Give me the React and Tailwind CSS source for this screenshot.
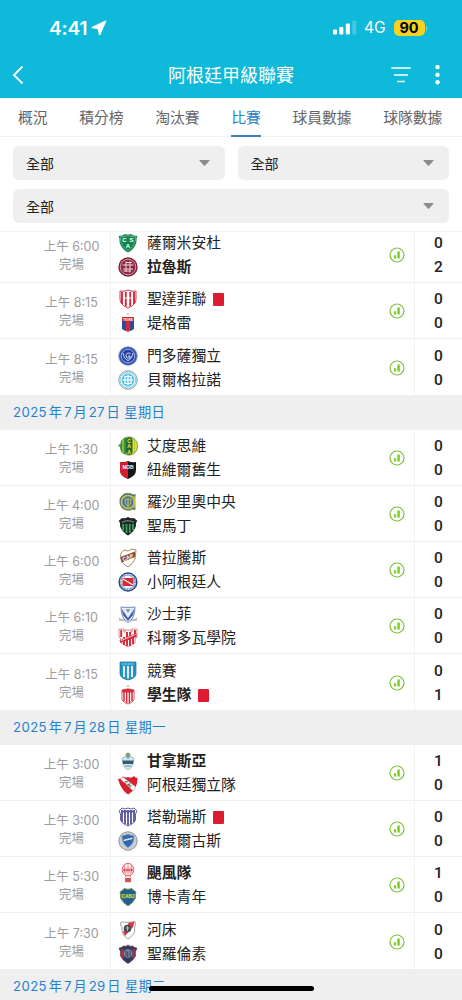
const SHIELD = "M2 2Q6 3 10 1Q14 3 18 2V10Q18 16 10 19Q2 16 2 10Z";

function Letters({ children, x = 10, y = 12, size = 6, fill = "#fff", ...rest }) {
  return (
    <text x={x} y={y} fontSize={size} fill={fill} fontWeight="700" textAnchor="middle" fontFamily="Liberation Sans, sans-serif" {...rest}>
      {children}
    </text>
  );
}

const crests = {
  sarmiento: (
    <>
      <path d="M.5 3Q5 3 7 1Q10 2 13 1Q15 3 19.5 3Q18 6 18.5 9Q17 16 10 19.5Q3 16 1.5 9Q2 6 .5 3Z" fill="#15834c" />
      <path d="M2.2 4Q10 1.5 17.8 4Q17 14 10 18Q3 14 2.2 4Z" fill="none" stroke="#8fcbaa" strokeWidth=".6" />
      <Letters x={6.5} y={9}>C</Letters>
      <Letters x={13.5} y={9}>S</Letters>
      <Letters y={15}>A</Letters>
    </>
  ),
  lanus: (
    <>
      <circle cx="10" cy="10" r="9.7" fill="#7d1f36" />
      <circle cx="10" cy="10" r="7.8" fill="#8d2941" stroke="#e2bdc5" strokeWidth=".8" />
      <path d="M8 4.5V15M12 4.5V15.5M4.5 8H15.5M5 12H15M8 5.5H14M5.5 14H13" stroke="#efd5da" strokeWidth="1" />
    </>
  ),
  union: (
    <>
      <path d={SHIELD} fill="#fff" stroke="#c8253a" strokeWidth=".9" />
      <path d="M4 3V15M7.8 3V17.5M12.2 3V17.5M16 3V15" stroke="#d9243b" strokeWidth="1.9" />
      <path d="M6 6V12M14 6V12M6 9H14" stroke="#fff" strokeWidth="1" />
    </>
  ),
  tigre: (
    <>
      <circle cx="10" cy="1" r=".9" fill="#f0a48c" />
      <path d="M4 4H16V16Q13 18 10 18.5Q7 18 4 16Z" fill="#244d9c" />
      <path d="M4 4H16V8H12.2V18L10 18.5L7.8 18V8H4Z" fill="#d92835" />
      <Letters y={7.5} size={3.2}>TIGRE</Letters>
    </>
  ),
  mendoza: (
    <>
      <circle cx="10" cy="10" r="9.2" fill="#3552ae" stroke="#7288cc" strokeWidth="1" />
      <circle cx="10" cy="10" r="6.8" fill="#2442a2" stroke="#b7c3e9" strokeWidth=".8" />
      <path d="M5 7Q6 13 10 14.5Q14 13 15 7M12.5 7.5Q8 6 8 10Q8.5 13 12 12V10H10" fill="none" stroke="#dde4fa" strokeWidth="1" />
    </>
  ),
  belgrano: (
    <>
      <circle cx="10" cy="10" r="9.3" fill="#e6f7fb" stroke="#729eac" strokeWidth=".9" />
      <circle cx="10" cy="10" r="7.9" fill="none" stroke="#8aaab6" strokeWidth="1.2" strokeDasharray="1 .8" />
      <circle cx="10" cy="10" r="6.4" fill="#55c5e9" />
      <path d="M10 4.5V15.5M4.5 10H15.5M10 6.5H7V13.5H10M10 6.5H13V13.5H10" fill="none" stroke="#fff" strokeWidth="1.2" />
    </>
  ),
  aldosivi: (
    <>
      <ellipse cx="11" cy="10" rx="8.6" ry="9.2" fill="#e9df35" stroke="#4a9346" strokeWidth=".8" />
      <path d="M8 1.5Q2 3 3 8L0 9L2.5 12Q2 17 7 18.5L9 15V4Z" fill="#37913e" />
      <path d="M5 3V17M16.5 4V16" stroke="#b7d238" strokeWidth="1.2" />
      <rect x="8" y="1.5" width="6.5" height="17" rx="2.5" fill="#26672f" />
      <Letters x={11.2} y={7} size={5.2} fill="#f2e952">C</Letters>
      <Letters x={11.2} y={12.4} size={5.2} fill="#f2e952">A</Letters>
      <Letters x={11.2} y={17.6} size={5.2} fill="#f2e952">A</Letters>
    </>
  ),
  newells: (
    <>
      <path d={SHIELD} fill="#171515" />
      <path d="M2 2Q6 3 10 1V19Q2 16 2 10Z" fill="#d71d2c" />
      <Letters y={9.2} size={5}>NOB</Letters>
    </>
  ),
  rosario: (
    <>
      <path d="M16 3Q18 1 17 5V15Q18 19 15 17Q9 20 4 16Q1 12 2 7Q5 0 12 1.5Z" fill="#3f74a3" stroke="#817d43" strokeWidth=".7" />
      <circle cx="10" cy="10" r="6.5" fill="none" stroke="#d6c83d" strokeWidth="1.5" />
      <path d="M7 7H13V9Q13 13 10 15Q7 13 7 9Z" fill="#557fa5" stroke="#d6c83d" strokeWidth=".8" />
      <path d="M10 7V14M16 4V16" stroke="#d6c83d" strokeWidth="1" />
    </>
  ),
  sanmartin: (
    <>
      <path d="M.5 5L4 2Q7 3 10 1Q13 3 16 2L19.5 5Q17.5 6 18 10Q16 16 10 19.5Q4 16 2 10Q2.5 6 .5 5Z" fill="#1d2a23" />
      <path d="M5.2 8V14.5M8.5 8V17M11.8 8V17M15 8V14" stroke="#36a05f" strokeWidth="1.8" />
      <path d="M4 6.5Q10 3 16 6.5" fill="none" stroke="#d8e0da" strokeWidth=".9" strokeDasharray="1.2 .5" />
    </>
  ),
  platense: (
    <>
      <path d="M3 5L6 2L10 3L14 1L18 2L17 11Q15 16 10 19Q3 15 2.5 9Z" fill="#fff" stroke="#a47b5b" strokeWidth=".9" />
      <path d="M2.5 9L17 3.5V9L3.5 14.5Z" fill="#87512d" />
      <Letters y={11.3} size={5.4} transform="rotate(-21 10 10)">CAP</Letters>
    </>
  ),
  argentinos: (
    <>
      <circle cx="10" cy="10" r="8.9" fill="#fff" stroke="#254a90" strokeWidth="1.5" />
      <circle cx="10" cy="10" r="7.1" fill="none" stroke="#50709f" strokeWidth="1.5" strokeDasharray="1 .6" />
      <rect x="4.5" y="6" width="11" height="8" rx="1" fill="#db2733" />
      <path d="M5 7L15 13" stroke="#fff" strokeWidth="1.2" />
    </>
  ),
  velez: (
    <>
      <circle cx="10" cy="1" r=".7" fill="#d9c795" />
      <path d="M1 16H19M1 14L5 17M19 14L15 17" stroke="#a6a28c" strokeWidth="1" />
      <path d="M3 3Q10 4 17 3Q17 15 10 18.5Q3 15 3 3Z" fill="#e9effa" stroke="#526fa9" strokeWidth=".8" />
      <path d="M3.5 4.5L10 14L16.5 4.5L15 11L10 17L5 11Z" fill="#3c61aa" />
      <path d="M7.5 5H12.5L10 9Z" fill="#7c96c7" />
    </>
  ),
  instituto: (
    <>
      <path d="M1 1H6V4H7V2H13V4H14V1H19V9L17 11V15L10 19L3 15V11L1 9Z" fill="#fff" stroke="#d3535f" strokeWidth=".7" />
      <path d="M3.2 2V9M6 9V17M9 4V18M12 4V18M15 9V16M17 2V9" stroke="#d4293b" strokeWidth="1.9" />
      <path d="M1.5 12L18.5 5V9L2.5 15Z" fill="#d4293b" />
      <path d="M3 12.5L17.5 6.5" stroke="#f8d9dc" strokeWidth="1.3" strokeDasharray="1.6 .6" />
    </>
  ),
  racing: (
    <>
      <path d="M2 1H18V13Q18 17 10 19Q2 17 2 13Z" fill="#2394c5" stroke="#246f94" strokeWidth=".7" />
      <path d="M6 5V16M10 5V17.5M14 5V16" stroke="#fff" strokeWidth="1.7" />
      <path d="M4 3H16" stroke="#b9e4f5" strokeWidth="1.1" strokeDasharray="1 .5" />
    </>
  ),
  estudiantes: (
    <>
      <circle cx="10" cy="1.2" r=".9" fill="#e29a72" />
      <path d="M4 5Q10 2.5 16 5V15Q14 18 10 19Q6 18 4 15Z" fill="#fff" stroke="#d23040" strokeWidth=".8" />
      <path d="M4.2 5Q10 2.8 15.8 5V7.5H4.2Z" fill="#d52c3d" />
      <path d="M6 7V16.5M8.7 7V18M11.4 7V18M14 7V16.5" stroke="#d52c3d" strokeWidth="1.5" />
    </>
  ),
  gimnasia: (
    <>
      <path d="M7.5 3Q10 0 12.5 3L12 7H8Z" fill="#8f9b83" />
      <path d="M4 7Q7 5 10 6Q13 5 16 7L15 14Q13 18 10 19Q7 18 5 14Z" fill="#cfe8ee" stroke="#8eafb8" strokeWidth=".7" />
      <path d="M4.3 9.5H15.7L15 13H5Z" fill="#385b75" />
      <path d="M10 4V8M8 5H12M7 15H13" stroke="#6b918f" strokeWidth="1.1" />
    </>
  ),
  independiente: (
    <>
      <path d="M0 4Q3 4 5 1.5Q8 3 10 2Q13 4 16 1Q17 3 19.5 3Q20 14 10 19.5Q3 15 0 4Z" fill="#d8202f" />
      <path d="M2 3.7L5 2L18 12L15 16Z" fill="#fff" stroke="#a64a51" strokeWidth=".3" />
      <Letters y={10.7} size={4.8} fill="#333" transform="rotate(39 10 9)">CAI</Letters>
    </>
  ),
  talleres: (
    <>
      <path d="M1 4L4 1L7 2L10 1L13 2L16 1L19 4L17.5 7V13Q16 17 10 19Q4 17 2.5 13V7Z" fill="#fff" stroke="#57509a" strokeWidth=".9" />
      <path d="M4 3V15M7 3V17M10 3V18M13 3V17M16 3V15" stroke="#413b8b" strokeWidth="1.6" />
      <path d="M3 4.5H17" stroke="#5d579f" strokeWidth="1.8" />
    </>
  ),
  godoy: (
    <>
      <circle cx="10" cy="10" r="9.2" fill="#c9ced4" stroke="#8d9297" strokeWidth="1" />
      <path d="M4 5Q10 2 16 5Q16 13 10 16.5Q4 13 4 5Z" fill="#3567ad" stroke="#6d91c2" strokeWidth=".8" />
      <path d="M5.5 9.5L14.5 7.2" stroke="#d9e8f6" strokeWidth="1.5" />
    </>
  ),
  huracan: (
    <>
      <ellipse cx="10" cy="6.6" rx="5.8" ry="6.2" fill="#fff2f2" stroke="#df4c55" strokeWidth=".9" />
      <path d="M7 1.5Q5 7 8 12.5M10 .5V12.5M13 1.5Q15 7 12 12.5M4.5 5H15.5M5 9H15" fill="none" stroke="#e77a80" strokeWidth=".7" />
      <path d="M5.5 7H14.5" stroke="#d93943" strokeWidth="1.8" strokeDasharray="1.4 .5" />
      <path d="M7.5 12.5L8 15M12.5 12.5L12 15" stroke="#c26767" strokeWidth=".7" />
      <rect x="7" y="15" width="6" height="4.3" rx=".8" fill="#d94d55" />
    </>
  ),
  boca: (
    <>
      <path d="M2 5Q5 3 6 1.5Q10 3 14 1.5Q15 3 18 5Q17 8 17.5 11Q15 16 10 19Q5 16 2.5 11Q3 8 2 5Z" fill="#205f8e" stroke="#789548" strokeWidth=".9" />
      <path d="M3 7H17V11.5H3Z" fill="#317b7d" />
      <Letters y={10.8} size={4.8} fill="#f2dc3e">CABJ</Letters>
    </>
  ),
  river: (
    <>
      <path d="M3 2Q10 3 17 1.5Q18 4 16.5 8Q18 14 10 19Q5 16 4 11Q5 7 2.5 5Z" fill="#fff" stroke="#95989b" strokeWidth=".9" />
      <path d="M11 2.5L16.5 2L15 7L7 16L5 12Z" fill="#d93443" />
      <circle cx="9.5" cy="8.5" r="3.8" fill="#454b50" />
      <path d="M7.5 8H11.5M9.5 6V11" stroke="#bbc0c3" strokeWidth=".9" />
    </>
  ),
  sanlorenzo: (
    <>
      <path d="M1 4Q4 4 5 2Q8 3 10 1Q12 3 15 2Q16 4 19 4Q17 7 17.5 12Q15 17 10 19.5Q5 17 2.5 12Q3 7 1 4Z" fill="#293c62" stroke="#7a3c4d" strokeWidth=".7" />
      <path d="M4.5 5V14M15.5 5V14" stroke="#ba3043" strokeWidth="2.3" />
      <circle cx="10" cy="9.5" r="4.6" fill="#8990aa" stroke="#434764" strokeWidth=".8" />
      <path d="M8 6.5V12.5M12 6.5V12.5M9.8 7.5V13" stroke="#303750" strokeWidth="1" />
    </>
  ),
};

const tabs = ["概況", "積分榜", "淘汰賽", "比賽", "球員數據", "球隊數據"];

const firstMatches = [
  { time: "6:00", home: { name: "薩爾米安杜", crest: "sarmiento", score: 0 }, away: { name: "拉魯斯", crest: "lanus", score: 2 } },
  { time: "8:15", home: { name: "聖達菲聯", crest: "union", score: 0, red: true }, away: { name: "堤格雷", crest: "tigre", score: 0 } },
  { time: "8:15", home: { name: "門多薩獨立", crest: "mendoza", score: 0 }, away: { name: "貝爾格拉諾", crest: "belgrano", score: 0 } },
];

const days = [
  { matches: firstMatches },
  {
    date: "2025年7月27日 星期日",
    matches: [
      { time: "1:30", home: { name: "艾度思維", crest: "aldosivi", score: 0 }, away: { name: "紐維爾舊生", crest: "newells", score: 0 } },
      { time: "4:00", home: { name: "羅沙里奧中央", crest: "rosario", score: 0 }, away: { name: "聖馬丁", crest: "sanmartin", score: 0 } },
      { time: "6:00", home: { name: "普拉騰斯", crest: "platense", score: 0 }, away: { name: "小阿根廷人", crest: "argentinos", score: 0 } },
      { time: "6:10", home: { name: "沙士菲", crest: "velez", score: 0 }, away: { name: "科爾多瓦學院", crest: "instituto", score: 0 } },
      { time: "8:15", home: { name: "競賽", crest: "racing", score: 0 }, away: { name: "學生隊", crest: "estudiantes", score: 1, red: true } },
    ],
  },
  {
    date: "2025年7月28日 星期一",
    matches: [
      { time: "3:00", home: { name: "甘拿斯亞", crest: "gimnasia", score: 1 }, away: { name: "阿根廷獨立隊", crest: "independiente", score: 0 } },
      { time: "3:00", home: { name: "塔勒瑞斯", crest: "talleres", score: 0, red: true }, away: { name: "葛度爾古斯", crest: "godoy", score: 0 } },
      { time: "5:30", home: { name: "颶風隊", crest: "huracan", score: 1 }, away: { name: "博卡青年", crest: "boca", score: 0 } },
      { time: "7:30", home: { name: "河床", crest: "river", score: 0 }, away: { name: "聖羅倫素", crest: "sanlorenzo", score: 0 } },
    ],
  },
  { date: "2025年7月29日 星期二", matches: [] },
];

function StatusBar() {
  return (
    <div className="flex h-[55px] items-center pl-[49px] pr-[35px] pt-px text-white">
      <span className="text-[19px] font-semibold leading-none tracking-[-0.1px]">4:41</span>
      <svg className="ml-1 size-4" viewBox="0 0 16 16">
        <path d="M14.6 1.2L8.6 14.6L7.4 8.6L1.2 7.6Z" fill="currentColor" stroke="currentColor" strokeWidth="1.4" strokeLinejoin="round" />
      </svg>
      <svg className="ml-auto h-4 w-6" viewBox="0 0 24 16" fill="currentColor">
        <rect x="0" y="9.5" width="4" height="5" rx="1" />
        <rect x="6.3" y="7" width="4" height="7.5" rx="1" />
        <rect x="12.8" y="3.5" width="4" height="11" rx="1" />
        <rect x="19.3" y="0.5" width="4" height="14" rx="1" opacity=".22" />
      </svg>
      <span className="ml-[7px] text-[15.5px] leading-none">4G</span>
      <span className="ml-2 flex h-4 w-[31px] items-center justify-center rounded-[5px] bg-[#f6d21f] text-[14.5px] font-bold leading-none text-black">
        90
      </span>
      <span className="ml-px h-[5px] w-[1.5px] rounded-r bg-white/40" />
    </div>
  );
}

function TitleBar() {
  return (
    <div className="grid h-[43px] grid-cols-[1fr_auto_1fr] items-start pl-3 pr-5 text-white">
      <svg className="mt-2.5 h-5 w-3" viewBox="0 0 12 20" fill="none" stroke="currentColor" strokeWidth="1.8">
        <path d="M10.5 1.5L2 10L10.5 18.5" />
      </svg>
      <h1 className="ml-2 mt-[7px] text-[18px] leading-7">阿根廷甲級聯賽</h1>
      <div className="mt-2.5 flex h-5 items-center justify-end gap-[22px]">
        <svg className="h-5 w-5" viewBox="0 0 20 20" stroke="currentColor" strokeWidth="1.6">
          <path d="M.3 3H19.7M3 10H17M6.3 16.5H13.7" />
        </svg>
        <svg className="h-5 w-[9px]" viewBox="0 0 9 20" fill="currentColor">
          <circle cx="4.5" cy="2.1" r="2.2" />
          <circle cx="4.5" cy="9.8" r="2.2" />
          <circle cx="4.5" cy="17.3" r="2.2" />
        </svg>
      </div>
    </div>
  );
}

function Select() {
  return (
    <button className="flex h-[34px] w-full items-center justify-between rounded-md bg-[#efefef] pl-[13px] pr-[15px] text-[14px] text-[#222]">
      全部
      <svg className="h-1.5 w-[11px]" viewBox="0 0 11 6">
        <path d="M.8 0H10.2Q11 0 10.4 .8L6.2 5.5Q5.5 6.2 4.8 5.5L.6 .8Q0 0 .8 0Z" fill="#8c8c8c" />
      </svg>
    </button>
  );
}

function Team({ team, winner }) {
  return (
    <div className="flex h-6 items-center">
      <svg className="size-5 shrink-0" viewBox="0 0 20 20">{crests[team.crest]}</svg>
      <span className={`ml-[9px] whitespace-nowrap text-[14.8px] leading-6 ${winner ? "font-bold" : ""}`}>{team.name}</span>
      {team.red && <span className="ml-[7px] h-[13px] w-[11px] rounded-[1px] bg-[#df1b32]" />}
    </div>
  );
}

function Match({ match, clipped }) {
  const { home, away } = match;
  return (
    <div className={`flex items-end overflow-hidden border-b border-[#f0f0f0] last:border-b-0 ${clipped ? "h-[51px]" : "h-14"}`}>
      <div className="flex h-14 w-[110px] shrink-0 flex-col items-center justify-center pl-[33px] pt-[3px] text-[12.5px] leading-[17.5px] text-[#9c9c9c]">
        <span className="whitespace-nowrap">上午 {match.time}</span>
        <span>完場</span>
      </div>
      <div className="flex h-14 flex-1 flex-col justify-center border-l border-[#f2f2f2] pl-[7px] pt-[2px]">
        <Team team={home} winner={home.score > away.score} />
        <Team team={away} winner={away.score > home.score} />
      </div>
      <div className="flex h-14 items-center pr-[9px] pt-px">
        <svg className="size-4" viewBox="0 0 16 16">
          <circle cx="8" cy="8" r="7" fill="none" stroke="#7fc23c" strokeWidth="1.2" />
          <path d="M4.9 8.2H7.1V11.6H4.9ZM8.3 4.6H10.8V11.6H8.3Z" fill="#7fcc24" />
        </svg>
      </div>
      <div className="flex h-14 w-12 flex-col items-center justify-center border-l border-[#f2f2f2] pt-[2px] font-[Roboto,sans-serif] text-[15.5px] font-medium leading-6">
        <span>{home.score}</span>
        <span>{away.score}</span>
      </div>
    </div>
  );
}

export default function App() {
  return (
    <div className="relative flex h-[1000px] w-[462px] flex-col overflow-hidden bg-white font-[Inter,'Noto_Sans_CJK_TC',sans-serif] text-[#222]">
      <header className="h-[98px] shrink-0 bg-[#0fb9d9]">
        <StatusBar />
        <TitleBar />
      </header>

      <nav className="flex h-[39px] shrink-0 gap-[31.6px] border-b border-[#f2f2f2] pl-[18px] text-[14.8px] text-[#666]">
        {tabs.map((tab) => (
          <button
            key={tab}
            className={`-mb-px flex shrink-0 items-center border-b-2 pt-[4px] ${tab === "比賽" ? "border-[#3982bd] text-[#2481c8]" : "border-transparent"}`}
          >
            {tab}
          </button>
        ))}
      </nav>

      <div className="grid h-[95px] shrink-0 grid-cols-2 content-start gap-x-[13px] gap-y-[9px] border-b border-[#f4f4f4] px-[13px] pt-[9px]">
        <Select />
        <Select />
        <div className="col-span-2">
          <Select />
        </div>
      </div>

      {/* Match list, first row is scrolled partly under the filters */}
      <main>
        {days.map((day, i) => (
          <section key={i}>
            {day.date && (
              <h2 className="h-[35px] bg-[#efefef] pl-[13px] text-[13.2px] leading-[35px] tracking-[0.4px] text-[#1c82cf] [text-autospace:normal]">
                {day.date}
              </h2>
            )}
            <div>
              {day.matches.map((match, j) => (
                <Match key={j} match={match} clipped={i === 0 && j === 0} />
              ))}
            </div>
          </section>
        ))}
      </main>

      {/* Home indicator */}
      <div className="absolute bottom-[9px] left-[149px] h-[5px] w-[165px] rounded-full bg-black" />
    </div>
  );
}
